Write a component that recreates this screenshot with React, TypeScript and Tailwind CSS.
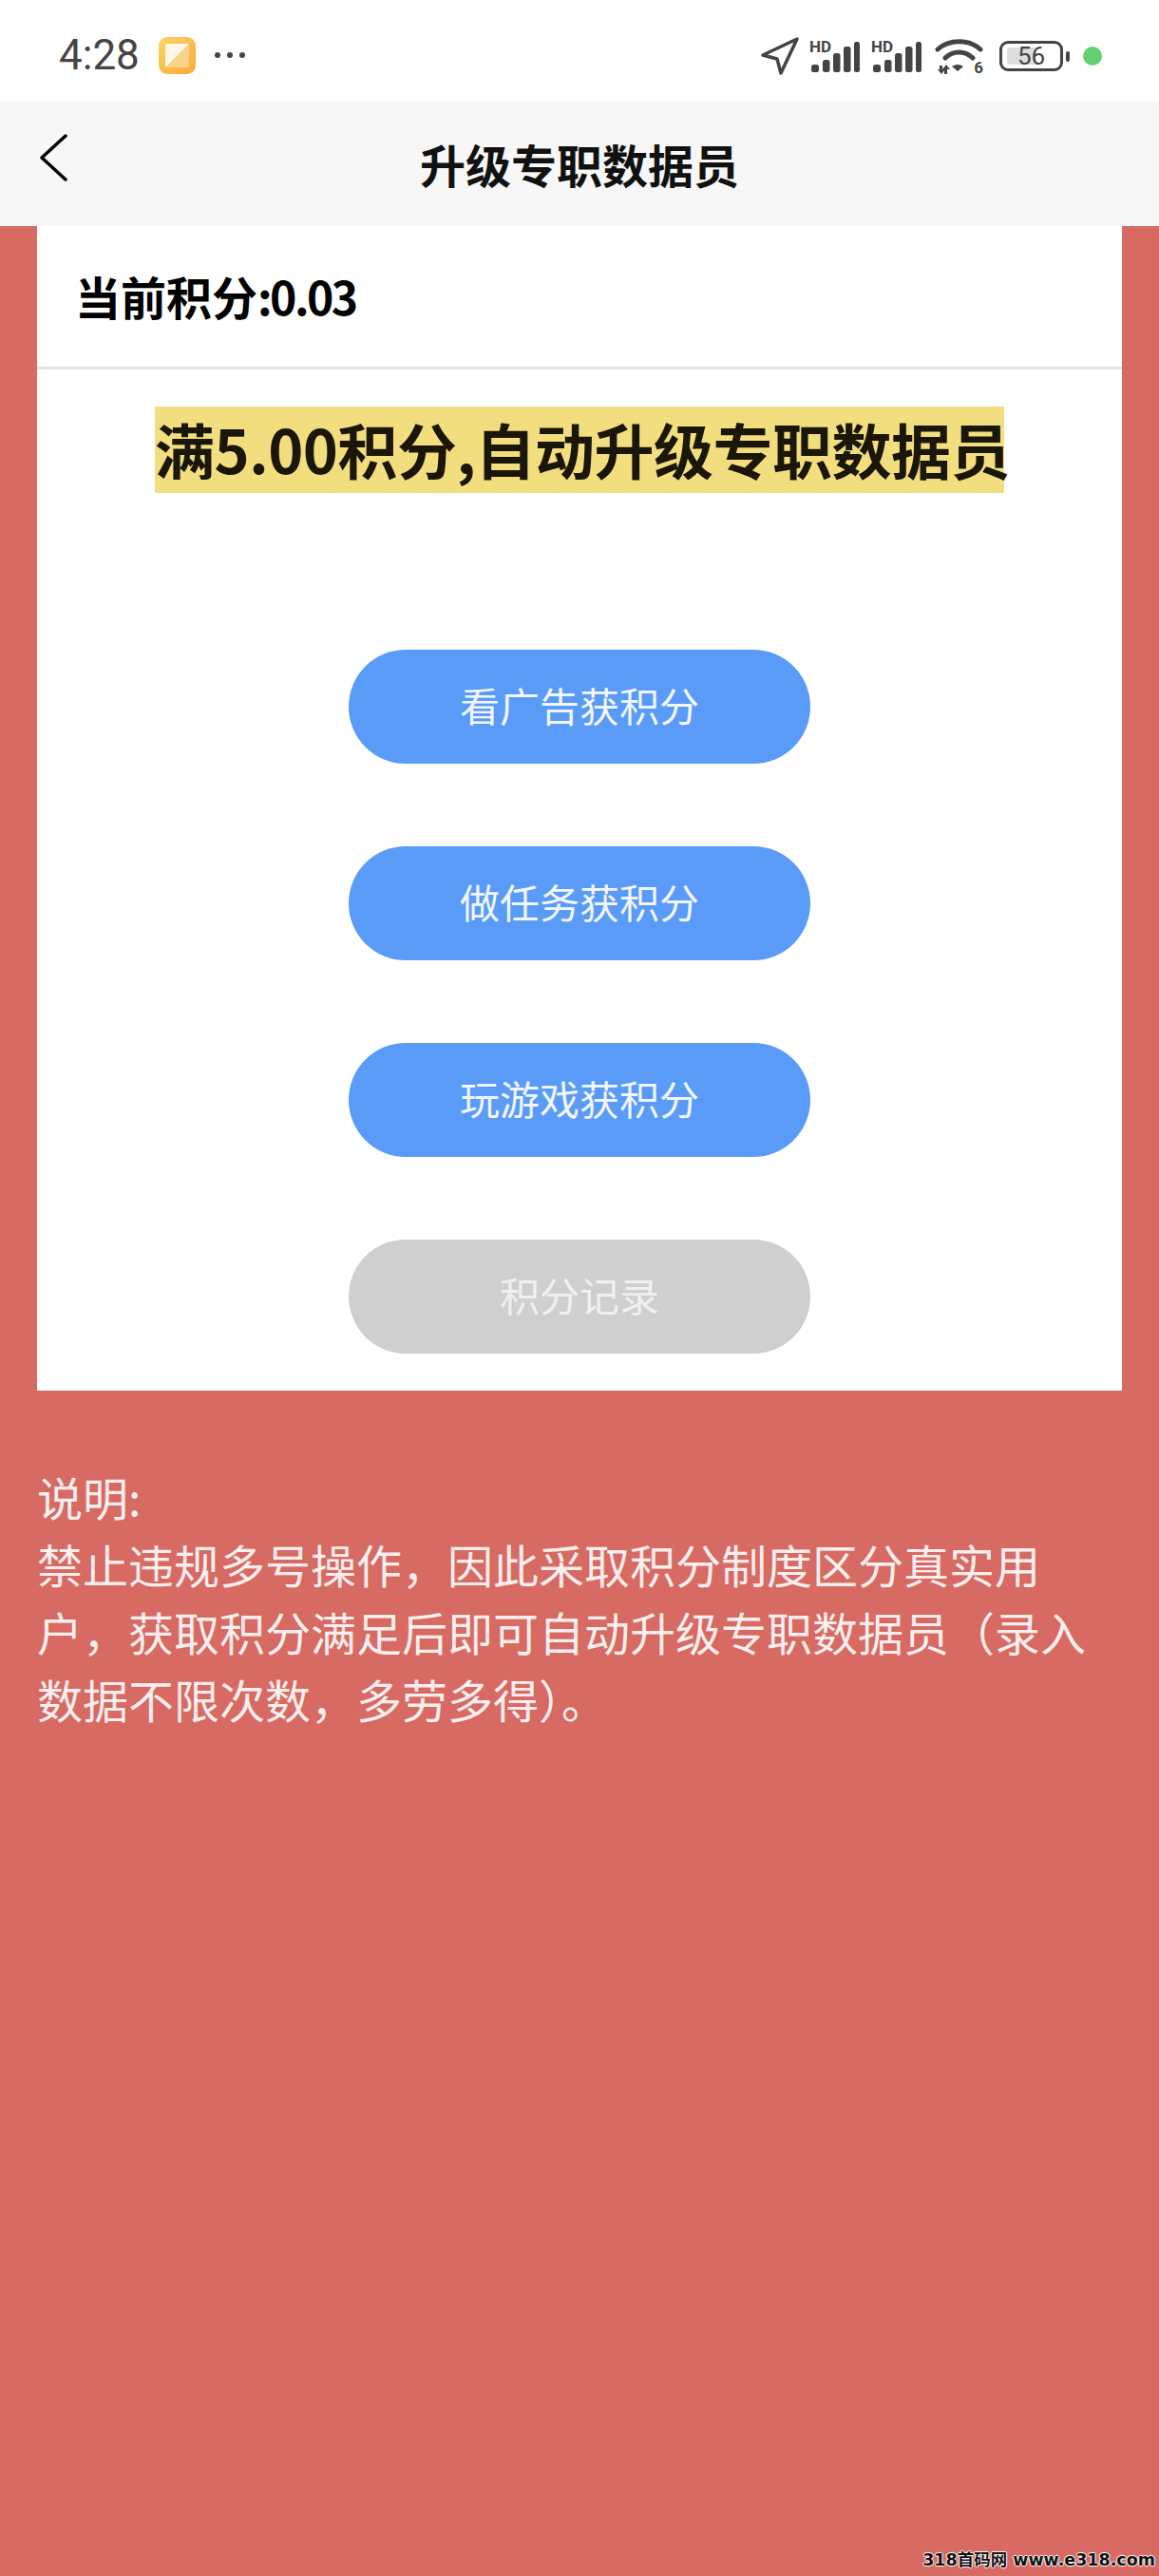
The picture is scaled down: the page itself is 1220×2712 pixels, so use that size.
import React from 'react'

const cjk = "font-['Noto_Sans_CJK_SC','Noto_Sans',sans-serif]"

function Signal() {
  return (
    <div className="relative w-[53px] h-[33px]">
      <span className="absolute left-0 top-[-3px] text-[17px] leading-[18px] font-bold text-[#444] font-['Roboto',sans-serif]">HD</span>
      <svg width="53" height="33" viewBox="0 0 53 33" className="absolute inset-0">
        <rect x="2" y="25" width="8" height="8" rx="2.5" fill="#444" />
        <rect x="14" y="20" width="7.5" height="13" rx="2.5" fill="#444" />
        <rect x="25" y="13" width="7.5" height="20" rx="2.5" fill="#444" />
        <rect x="36" y="6" width="7.5" height="27" rx="2.5" fill="#444" />
        <rect x="47" y="1" width="6" height="32" rx="2.5" fill="#444" />
      </svg>
    </div>
  )
}

function StatusBar() {
  return (
    <div className="h-[106px] bg-white flex items-center pl-[62px] pr-[60px] pt-[12px] text-[#444]">
      <span className="text-[44px] leading-none font-['Roboto',sans-serif] mt-[-2px]">4:28</span>
      <div className="ml-[20px] w-[39px] h-[39px] rounded-[9px] bg-gradient-to-br from-[#f8d562] to-[#fba83a] flex items-center justify-center mt-[-1px]">
        <svg width="25" height="25" viewBox="0 0 25 25">
          <rect width="25" height="25" rx="2" fill="#fbd28a" />
          <path d="M0 2a2 2 0 0 1 2-2h23L0 25z" fill="#fff8e8" />
        </svg>
      </div>
      <div className="ml-[20px] flex gap-[7px] mt-[-2px]">
        <span className="w-[6px] h-[6px] rounded-full bg-[#444]" />
        <span className="w-[6px] h-[6px] rounded-full bg-[#444]" />
        <span className="w-[6px] h-[6px] rounded-full bg-[#444]" />
      </div>
      <div className="ml-auto flex items-center">
        <svg width="40" height="40" viewBox="0 0 40 40" fill="none" stroke="#444" strokeWidth="3.5" strokeLinejoin="round">
          <path d="M2 19L38 2L21 38L17 23z" />
        </svg>
        <div className="ml-[11px]"><Signal /></div>
        <div className="ml-[12px]"><Signal /></div>
        <div className="ml-[14px] relative w-[51px] h-[37px]">
          <svg width="51" height="37" viewBox="0 0 51 37" className="absolute inset-0">
            <g fill="none" stroke="#444" strokeWidth="5" strokeLinecap="round">
              <path d="M3 11C15 0 36 0 48 11" />
              <path d="M11 20C19 12 32 12 40 20" />
            </g>
            <path d="M18 29Q24 25 30 29L24 34z" fill="#444" />
            <path d="M5 28h3v4h3l-4 5l-4-5h2zM13 37h-3v-5H8l4-5l4 5h-3z" fill="#444" />
          </svg>
          <span className="absolute right-0 bottom-[-2px] text-[17px] leading-none font-bold font-['Roboto',sans-serif]">6</span>
        </div>
        <div className="ml-[17px] relative w-[67px] h-[32px] rounded-[9px] border-[3px] border-[#444] overflow-hidden">
          <div className="absolute left-[5px] top-[4px] bottom-[4px] w-[31px] rounded-[3px] bg-[#dedede]" />
          <span className="relative flex h-full items-center justify-center text-[26px] leading-none font-['Roboto',sans-serif]">56</span>
        </div>
        <div className="ml-[3px] w-[4px] h-[11px] rounded-[2px] bg-[#444]" />
        <div className="ml-[14px] w-[20px] h-[20px] rounded-full bg-[#66cf73]" />
      </div>
    </div>
  )
}

function NavBar() {
  return (
    <div className="relative h-[132px] bg-[#f7f7f7] flex items-center justify-center">
      <svg width="32" height="54" viewBox="0 0 32 54" fill="none" stroke="#000" strokeWidth="3.5" strokeLinecap="round" strokeLinejoin="round" className="absolute left-[41px] top-[35px]">
        <path d="M28 2L3 25L28 48" />
      </svg>
      <h1 className="text-[48px] leading-none font-bold text-[#111]">升级专职数据员</h1>
    </div>
  )
}

const buttons = ['看广告获积分', '做任务获积分', '玩游戏获积分']

function ScoreCard() {
  return (
    <div className="mx-[39px] bg-white h-[1226px]">
      <div className="h-[151px] border-b-[3px] border-[#e4e4e4] flex items-center pl-[42px]">
        <span className="text-[48px] leading-none font-bold text-black mt-[-3px] ml-[-2px]">当前积分<span className="tracking-[-2.5px]">:0.03</span></span>
      </div>
      <div className="flex justify-center pt-[39px]">
        <h2 className="h-[91px] w-[894px] bg-[#f3de7f] text-[63px] leading-[87px] font-bold text-[#1a1608] text-center whitespace-nowrap tracking-[-0.5px]">满5.00积分,自动升级专职数据员</h2>
      </div>
      <div className="mt-[165px] flex flex-col items-center gap-[87px]">
        {buttons.map(b => (
          <button key={b} className="w-[486px] h-[120px] pb-[5px] rounded-[60px] bg-[#5a9bf8] text-[42px] leading-none text-[#f2f6fd]">{b}</button>
        ))}
        <button className="w-[486px] h-[120px] pb-[5px] rounded-[60px] bg-[#cfcfcf] text-[42px] leading-none text-[#f0f0f0]">积分记录</button>
      </div>
    </div>
  )
}

export default function App() {
  return (
    <div className={`${cjk} relative w-[1220px] h-[2712px] bg-[#d76a62] overflow-hidden`}>
      <StatusBar />
      <NavBar />
      <ScoreCard />
      <div className="mt-[76px] pl-[39px] pr-[40px] text-[48px] leading-[71px] text-[#fbeeee]">
        <p>说明:</p>
        <p>禁止违规多号操作，因此采取积分制度区分真实用户，获取积分满足后即可自动升级专职数据员（录入数据不限次数，多劳多得）。</p>
      </div>
      <div className="absolute right-[4px] bottom-[7px] font-['DejaVu_Sans','Noto_Sans_CJK_SC',sans-serif] text-[17.5px] leading-[20px] font-bold text-[#111] whitespace-nowrap [text-shadow:1px_0_1px_#fff,-1px_0_1px_#fff,0_1px_1px_#fff,0_-1px_1px_#fff]">318首码网 www.e318.com</div>
    </div>
  )
}
